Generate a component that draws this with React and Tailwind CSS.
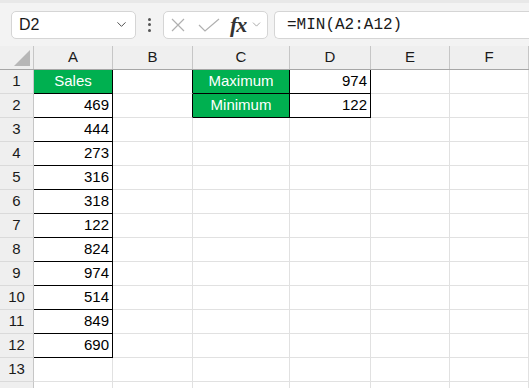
import { ChevronDown } from "lucide-react";

const cols = [
  { name: "A", w: "w-[79px]" },
  { name: "B", w: "w-[80px]" },
  { name: "C", w: "w-[97px]" },
  { name: "D", w: "w-[81px]" },
  { name: "E", w: "w-[79px]" },
  { name: "F", w: "w-[79px]" },
];

const sales = [469, 444, 273, 316, 318, 122, 824, 974, 514, 849, 690];

// per-cell content + border colours
function cellFor(row, col) {
  const cell = { text: "", green: false, align: "right", right: "border-r-[#e1e1e1]", bottom: "border-b-[#e1e1e1]" };
  if (col === 0 && row <= 12) {
    cell.right = "border-r-black";
    cell.bottom = "border-b-black";
    if (row === 1) {
      cell.text = "Sales";
      cell.green = true;
      cell.align = "center";
    } else {
      cell.text = sales[row - 2];
    }
  }
  if (col === 1 && row <= 2) cell.right = "border-r-black";
  if (col === 2 && row <= 2) {
    cell.right = "border-r-black";
    cell.bottom = "border-b-black";
    cell.green = true;
    cell.align = "center";
    cell.text = row === 1 ? "Maximum" : "Minimum";
  }
  if (col === 3 && row <= 2) {
    cell.right = "border-r-black";
    cell.bottom = "border-b-black";
    cell.text = row === 1 ? 974 : 122;
  }
  return cell;
}

export default function App() {
  const rows = Array.from({ length: 14 }, (_, i) => i + 1);

  return (
    <div className="w-[529px] h-[388px] overflow-hidden bg-white font-['Liberation_Sans',Arial,sans-serif]">
      {/* Formula bar */}
      <div className="h-[46px] bg-[#f3f3f3] flex items-center border-t-[3px] border-t-[#e8e8e8]">
        <div className="ml-[11px] w-[125px] h-[28px] bg-white border border-[#d5d5d5] rounded-[5px] flex items-center justify-between pl-[7px] pr-[6px]">
          <span className="text-[16px] text-[#1a1a1a]">D2</span>
          <ChevronDown size={15} strokeWidth={1.5} className="text-[#444]" />
        </div>
        <div className="w-[27px] flex flex-col items-center gap-[2.5px]">
          <span className="w-[3px] h-[3px] bg-[#555] rounded-full" />
          <span className="w-[3px] h-[3px] bg-[#555] rounded-full" />
          <span className="w-[3px] h-[3px] bg-[#555] rounded-full" />
        </div>
        <div className="w-[105px] h-[28px] bg-white border border-[#d5d5d5] rounded-[5px] flex items-center pl-[6px]">
          <svg width="16" height="16" viewBox="0 0 16 16">
            <path d="M2 2 L14 14 M14 2 L2 14" stroke="#b0b0b0" strokeWidth="1.2" fill="none" />
          </svg>
          <svg width="22" height="14" viewBox="0 0 22 14" className="ml-[12px]">
            <path d="M1 7 L7 13 L21 1" stroke="#b0b0b0" strokeWidth="1.2" fill="none" />
          </svg>
          <span className="ml-[10px] font-['Liberation_Serif',serif] italic text-[22px] font-bold text-[#333] leading-none tracking-[-1px]">fx</span>
          <ChevronDown size={13} strokeWidth={1.3} className="ml-[4px] text-[#888]" />
        </div>
        <div className="ml-[6px] flex-1 h-[28px] bg-white border border-[#d5d5d5] border-r-0 rounded-l-[5px] flex items-center pl-[12px]">
          <span className="font-['Liberation_Mono',monospace] text-[16px] text-[#1a1a1a]">=MIN(A2:A12)</span>
        </div>
      </div>

      {/* Column headers */}
      <div className="flex h-[24px] bg-[#efefef] border-b border-b-[#a6a6a6]">
        <div className="w-[34px] shrink-0 border-r border-r-[#c6c6c6] relative">
          <div className="absolute right-[3px] bottom-[3px] w-0 h-0 border-l-[16px] border-l-transparent border-b-[16px] border-b-[#b7b7b7]" />
        </div>
        {cols.map((c) => (
          <div key={c.name} className={`${c.w} shrink-0 border-r border-r-[#c6c6c6] flex items-center justify-center text-[15px] text-[#1a1a1a]`}>
            {c.name}
          </div>
        ))}
      </div>

      {/* Rows */}
      {rows.map((r) => (
        <div key={r} className="flex h-[24px]">
          <div className="w-[34px] shrink-0 bg-[#efefef] border-r border-r-[#c6c6c6] border-b border-b-[#dadada] flex items-center justify-center text-[15px] text-[#1a1a1a]">
            {r <= 13 ? r : ""}
          </div>
          {cols.map((c, ci) => {
            const cell = cellFor(r, ci);
            return (
              <div
                key={c.name}
                className={`${c.w} shrink-0 border-r border-b ${cell.right} ${cell.bottom} ${cell.green ? "bg-[#00b050] text-white" : "text-black"} ${cell.align === "center" ? "justify-center" : "justify-end pr-[3px]"} flex items-center text-[15px]`}
              >
                {cell.text}
              </div>
            );
          })}
        </div>
      ))}
    </div>
  );
}
